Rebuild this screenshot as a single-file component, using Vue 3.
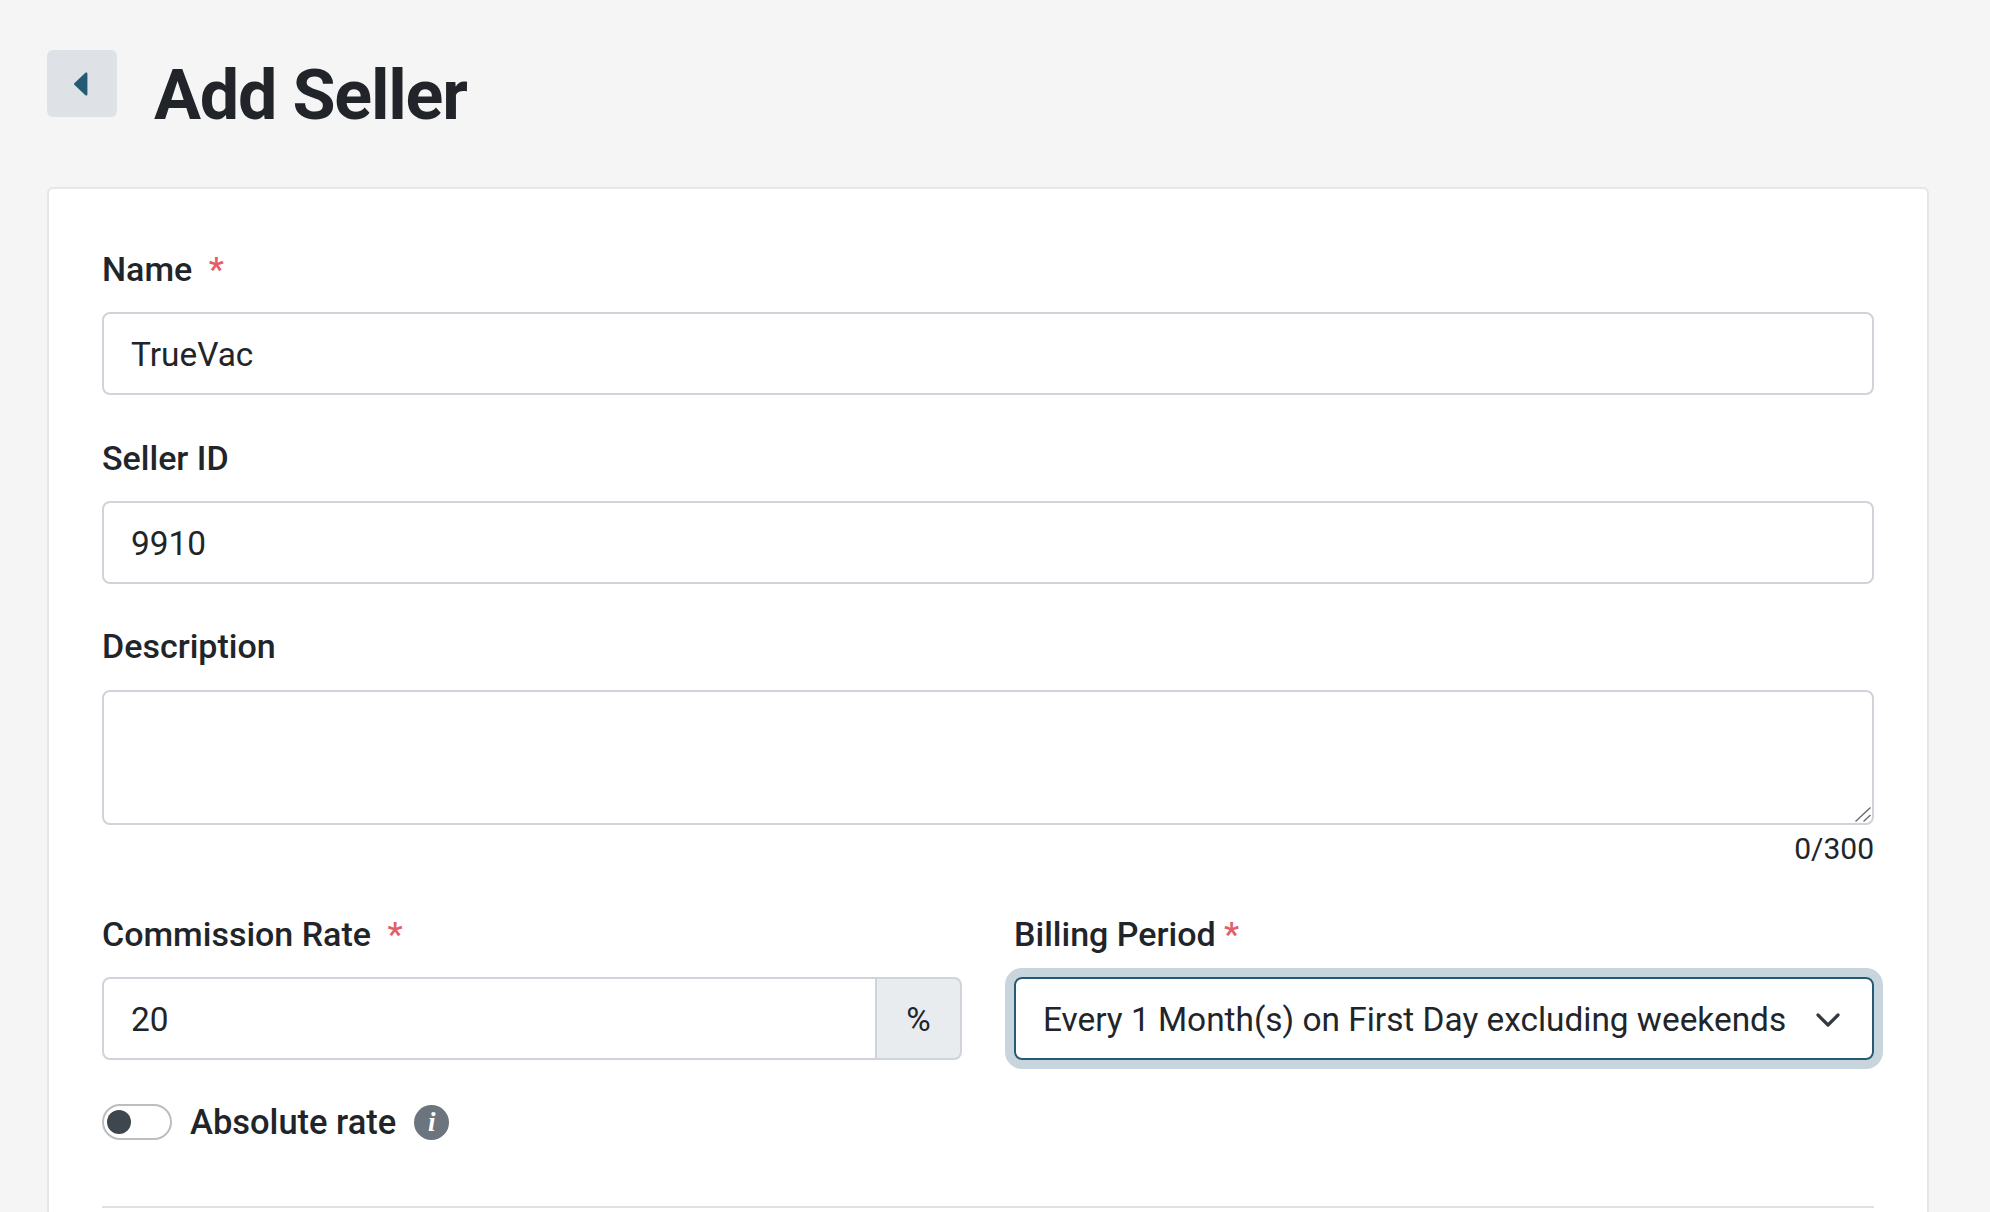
<script setup>
const name = "TrueVac";
const sellerId = "9910";
const rate = "20";
const period = "Every 1 Month(s) on First Day excluding weekends";
</script>

<template>
  <div class="page">
    <header class="head">
      <button class="back" type="button" aria-label="Back">
        <svg width="17" height="26" viewBox="0 0 16 24">
          <path d="M14.5 2.2v19.6c0 1-1.2 1.4-1.9.7L2.2 12.8a1.2 1.2 0 0 1 0-1.6L12.600 1.500c.7-.7 1.900-.3 1.900.7z" fill="#245a73" />
        </svg>
      </button>
      <h1>Add Seller</h1>
    </header>

    <form class="card">
      <div class="field name">
        <label>Name <span class="req req-gap">*</span></label>
        <input class="input" type="text" :value="name" />
      </div>
      <div class="field seller">
        <label>Seller ID</label>
        <input class="input" type="text" :value="sellerId" />
      </div>
      <div class="field desc">
        <label>Description</label>
        <div class="area-wrap">
          <textarea class="input area"></textarea>
          <svg class="grip" width="16" height="15" viewBox="0 0 16 15">
            <path d="M.5 14.500 15.500.500M8.500 14.500 15.500 8" stroke="#666" stroke-width="1.300" fill="none" />
          </svg>
        </div>
        <div class="count">0/300</div>
      </div>

      <div class="cols">
        <div class="field">
          <label>Commission Rate <span class="req req-gap">*</span></label>
          <div class="group">
            <input class="input group-input" type="text" :value="rate" />
            <span class="addon">%</span>
          </div>
        </div>
        <div class="field">
          <label>Billing Period <span class="req">*</span></label>
          <div class="select">
            <span class="select-text">{{ period }}</span>
            <svg width="24" height="14" viewBox="0 0 24 14">
              <path d="M2 2 12 12 22 2" fill="none" stroke="#343a40" stroke-width="3.200" stroke-linecap="round" stroke-linejoin="round" />
            </svg>
          </div>
        </div>
      </div>

      <div class="switch-row">
        <span class="switch"><span class="knob"></span></span>
        <span class="switch-label">Absolute rate</span>
        <span class="info">i</span>
      </div>

      <hr class="rule" />
    </form>
  </div>
</template>

<style>
html,
body {
  height: 100%;
  overflow: hidden;
  background: #f5f5f5;
}
</style>

<style scoped>
.page {
  padding: 50px 61px 0 47px;
  height: 1212px;
  box-sizing: border-box;
  overflow: hidden;
  font-family: Roboto, "Liberation Sans", sans-serif;
  color: #212529;
}

.head {
  display: flex;
  align-items: flex-start;
  gap: 37px;
  height: 137px;
}

.back {
  width: 70px;
  height: 67px;
  padding: 0;
  border: 0;
  border-radius: 6px;
  background: #dee2e6;
  display: flex;
  align-items: center;
  justify-content: center;
}

.back svg {
  margin: 0 4px 0 0;
}

h1 {
  margin: 0;
  font-size: 70px;
  line-height: 90px;
  font-weight: 700;
  letter-spacing: -1.2px;
  color: #212529;
}

.card {
  border: 2px solid #e3e6ea;
  border-radius: 6px;
  background: #fff;
  padding: 0 53px;
  height: 1100px;
  box-sizing: border-box;
}

.field {
  display: flex;
  flex-direction: column;
}

label {
  font-size: 34px;
  line-height: 40px;
  font-weight: 500;
  height: 40px;
  margin-bottom: 23px;
}

.name {
  padding-top: 60px;
}

.seller {
  padding-top: 43px;
}

.desc {
  padding-top: 42px;
}

.desc label {
  margin-bottom: 24px;
}

.req {
  color: #e35d6a;
}

.req-gap {
  margin-left: 8px;
}

.input {
  display: block;
  width: 100%;
  height: 83px;
  box-sizing: border-box;
  border: 2px solid #ced4da;
  border-radius: 8px;
  padding: 2px 27px 0;
  font-family: inherit;
  font-size: 33.4px;
  color: #212529;
  background: #fff;
  outline: none;
}

.area-wrap {
  position: relative;
}

.area {
  height: 135px;
  resize: none;
}

.grip {
  position: absolute;
  right: 3px;
  bottom: 3px;
}

.count {
  text-align: right;
  font-size: 30px;
  line-height: 34px;
  margin-top: 7px;
}

.cols {
  display: grid;
  grid-template-columns: 1fr 1fr;
  gap: 52px;
  margin-top: 48px;
}

.group {
  display: flex;
}

.group-input {
  flex: 1;
  min-width: 0;
  border-radius: 8px 0 0 8px;
}

.addon {
  width: 87px;
  box-sizing: border-box;
  height: 83px;
  margin-left: -2px;
  padding-top: 2px;
  border: 2px solid #ced4da;
  border-radius: 0 8px 8px 0;
  background: #e9ecef;
  display: flex;
  align-items: center;
  justify-content: center;
  font-size: 33.4px;
}

.select {
  height: 83px;
  box-sizing: border-box;
  border: 2px solid #245a73;
  border-radius: 8px;
  box-shadow: 0 0 0 9px #c9d5dc;
  padding: 2px 32px 0 27px;
  display: flex;
  align-items: center;
  justify-content: space-between;
  font-size: 33.4px;
}

.select-text {
  white-space: nowrap;
}

.switch-row {
  display: flex;
  align-items: center;
  margin-top: 42px;
}

.switch {
  width: 70px;
  height: 36px;
  box-sizing: border-box;
  border: 2px solid #bdbdbd;
  border-radius: 18px;
  padding: 3px;
  display: flex;
  align-items: center;
}

.knob {
  width: 24px;
  height: 24px;
  border-radius: 50%;
  background: #3e474d;
}

.switch-label {
  margin-left: 18px;
  font-size: 34.5px;
  font-weight: 500;
}

.info {
  margin-left: 18px;
  width: 35px;
  height: 35px;
  border-radius: 50%;
  background: #6c757d;
  color: #fff;
  display: flex;
  align-items: center;
  justify-content: center;
  font-family: "Liberation Serif", serif;
  font-style: italic;
  font-weight: 700;
  font-size: 27px;
}

.rule {
  margin: 64px 0 0;
  border: 0;
  border-top: 2px solid #dee2e6;
}
</style>
